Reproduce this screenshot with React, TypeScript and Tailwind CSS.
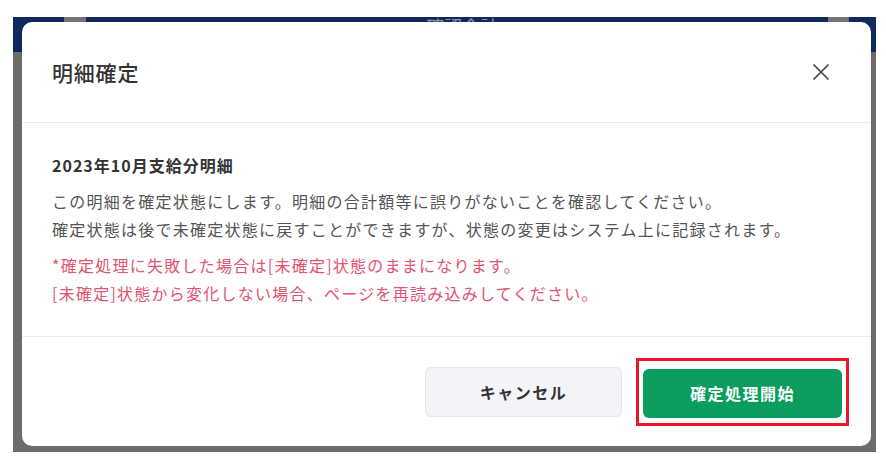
import React from "react";

export default function App() {
  return (
    <div className="w-[886px] h-[461px] bg-white overflow-hidden pt-[17px] pl-[13px] font-['Noto_Sans_CJK_JP','Noto_Sans',sans-serif]">
      <div className="relative w-[863px] h-[435px] bg-[#6c6c6c] overflow-hidden">
        {/* dimmed underlying page header */}
        <div className="h-[35px] bg-[#0e2a5c] flex justify-between pl-[51px] pr-[27px]">
          <div className="w-[22px] h-full bg-[#747474]" />
          <div className="text-[18px] leading-[18px] text-[#8a93a8] pl-[10px]">確認合計</div>
          <div className="w-[21px] h-full bg-[#747474]" />
        </div>

        {/* dialog */}
        <div className="absolute left-[9px] top-[5px] w-[849px] h-[424px] bg-white rounded-[10px] flex flex-col">
          <div className="h-[100px] flex items-center justify-between pl-[30px] pr-[41px]">
            <h2 className="text-[21px] leading-[28px] font-medium text-[#333] tracking-[0.8px]">明細確定</h2>
            <svg width="18" height="18" viewBox="0 0 18 18" fill="none">
              <path d="M2 2L16 16M16 2L2 16" stroke="#444" strokeWidth="1.7" strokeLinecap="round" />
            </svg>
          </div>
          <div className="h-px bg-[#ececec]" />
          <div className="h-[213px] px-[30px] pt-[31px]">
            <p className="text-[16px] leading-[22px] font-bold text-[#333] tracking-[1px]">2023年10月支給分明細</p>
            <p className="mt-[11px] text-[16px] leading-[28px] text-[#555] tracking-[1.25px]">
              この明細を確定状態にします。明細の合計額等に誤りがないことを確認してください。
              <br />
              確定状態は後で未確定状態に戻すことができますが、状態の変更はシステム上に記録されます。
            </p>
            <p className="mt-[8px] text-[16px] leading-[28px] text-[#df5470] tracking-[1.25px]">
              *確定処理に失敗した場合は[未確定]状態のままになります。
              <br />
              [未確定]状態から変化しない場合、ページを再読み込みしてください。
            </p>
          </div>
          <div className="h-px bg-[#ececec]" />
          <div className="flex-1 flex items-center justify-end pr-[22px] gap-[14px]">
            <button className="w-[197px] h-[50px] rounded-[6px] bg-[#f3f4f8] border border-[#e3e5ea] text-[16px] font-bold text-[#333] tracking-[1.5px]">
              キャンセル
            </button>
            <div className="border-[3px] border-[#e8182c] pl-[4px] pr-[4px] pt-[8px] pb-[5px]">
              <button className="w-[199px] h-[49px] rounded-[6px] bg-[#0a9d5e] text-[16px] font-bold text-white tracking-[1.5px]">
                確定処理開始
              </button>
            </div>
          </div>
        </div>
      </div>
    </div>
  );
}
